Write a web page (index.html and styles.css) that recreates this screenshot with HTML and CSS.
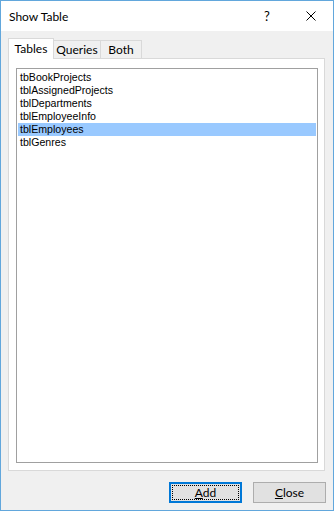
FILE: index.html
```html
<!DOCTYPE html>
<html lang="en">
<head>
<meta charset="UTF-8">
<meta name="viewport" content="width=device-width, initial-scale=1.0">
<title>Show Table</title>
<link rel="stylesheet" href="styles.css">
</head>
<body>

<div class="window">
  <div class="titlebar">
    <span class="title">Show Table</span>
    <span class="help">?</span>
    <span class="close">
      <svg width="10" height="10" viewBox="0 0 10 10">
        <path d="M0.5 0.5 L9.5 9.5 M9.5 0.5 L0.5 9.5" stroke="#000" stroke-width="1" fill="none"/>
      </svg>
    </span>
  </div>

  <div class="content">
    <div class="tabs">
      <div class="tab active">Tables</div>
      <div class="tab">Queries</div>
      <div class="tab">Both</div>
    </div>

    <div class="panel">
      <ul class="listbox">
        <li>tbBookProjects</li>
        <li>tblAssignedProjects</li>
        <li>tblDepartments</li>
        <li>tblEmployeeInfo</li>
        <li class="selected">tblEmployees</li>
        <li>tblGenres</li>
      </ul>
    </div>

    <div class="buttons">
      <button class="btn default"><u>A</u>dd</button>
      <button class="btn"><u>C</u>lose</button>
    </div>
  </div>
</div>

</body>
</html>
```

FILE: styles.css
```css
body {
  margin: 0;
  padding: 0;
  font-family: Lato, "Noto Sans", sans-serif;
  font-size: 12px;
  color: #000;
}

.window {
  width: 334px;
  height: 511px;
  box-sizing: border-box;
  border: 1px solid #62a7dc;
  background-color: #f0f0f0;
  display: flex;
  flex-direction: column;
}

.titlebar {
  height: 30px;
  background-color: #fff;
  display: flex;
  align-items: center;
  padding-left: 8px;
}

.title {
  flex: 1;
  font-size: 12px;
}

.help {
  width: 42px;
  font-size: 13px;
}

.close {
  width: 27px;
  display: flex;
  align-items: center;
}

.content {
  flex: 1;
  display: flex;
  flex-direction: column;
  padding: 7px 7px 7px 7px;
}

.tabs {
  display: flex;
  align-items: flex-end;
  height: 20px;
  position: relative;
  z-index: 1;
}

.tab {
  height: 18px;
  box-sizing: border-box;
  border: 1px solid #d9d9d9;
  border-bottom: none;
  border-left: none;
  background-color: #f0f0f0;
  text-align: center;
  line-height: 17px;
  font-size: 12px;
}

.tab.active {
  height: 21px;
  margin-bottom: -1px;
  border-left: 1px solid #d9d9d9;
  background-color: #fff;
  line-height: 19px;
  width: 46px;
}

.tab:nth-child(2) {
  width: 47px;
}

.tab:nth-child(3) {
  width: 41px;
}

.panel {
  width: 317px;
  height: 413px;
  box-sizing: border-box;
  border: 1px solid #d9d9d9;
  background-color: #fff;
  padding: 9px 6px 7px 7px;
}

.listbox {
  list-style: none;
  margin: 0;
  padding: 2px 1px;
  height: 100%;
  box-sizing: border-box;
  border: 1px solid #a0a0a0;
}

.listbox li {
  height: 13px;
  line-height: 13px;
  padding-left: 2px;
  font-family: "Liberation Sans", Arial, sans-serif;
  font-size: 10.6px;
  white-space: nowrap;
}

.listbox li.selected {
  background-color: #99c9ff;
}

.buttons {
  display: flex;
  justify-content: flex-end;
  gap: 11px;
  margin-top: 11px;
}

.btn {
  width: 73px;
  height: 21px;
  padding: 0;
  border: 1px solid #adadad;
  background-color: #e1e1e1;
  font-family: inherit;
  font-size: 12px;
  color: #000;
}

.btn.default {
  border-color: #0078d7;
  box-shadow: inset 0 0 0 1px #0078d7;
  outline: 1px dotted #000;
  outline-offset: -4px;
}
```
